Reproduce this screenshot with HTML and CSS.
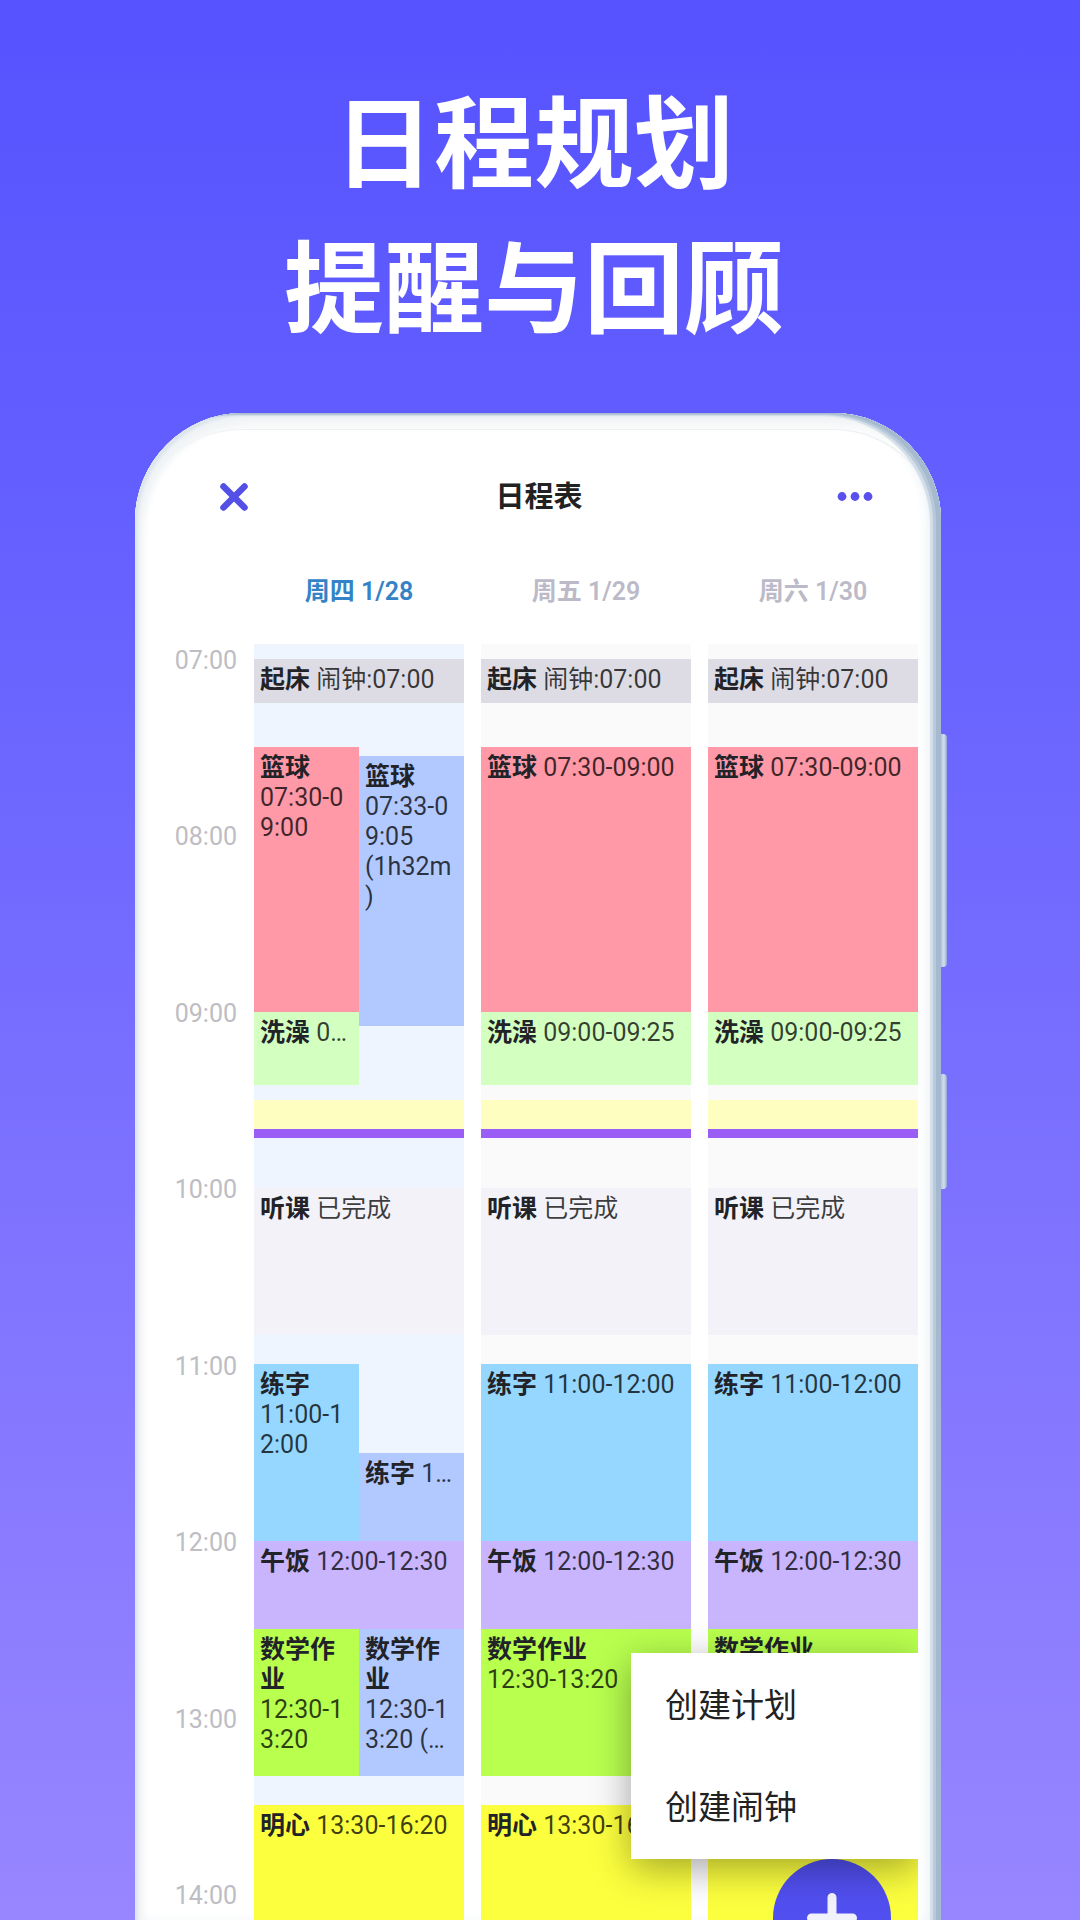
FILE: index.html
```html
<!DOCTYPE html>
<html lang="zh-CN">
<head>
<meta charset="utf-8">
<title>日程表</title>
<meta name="viewport" content="width=device-width, initial-scale=1">
<link rel="stylesheet" href="styles.css">
</head>
<body>
<div class="page">
<h1 class="slogan">日程规划<br>提醒与回顾</h1>
<div class="phone">
<div class="side-btn volume"></div>
<div class="side-btn power"></div>
<main class="screen">
<header class="topbar">
<button type="button" class="icon-btn" aria-label="关闭">
<svg width="28" height="28" viewBox="0 0 28 28"><path d="M3.5 3.5l21 21M24.5 3.5l-21 21" stroke="#5450e6" stroke-width="6.5" stroke-linecap="round"/></svg>
</button>
<h2>日程表</h2>
<button type="button" class="icon-btn more" aria-label="更多">
<svg width="36" height="10" viewBox="0 0 36 10" fill="#5a50ee"><circle cx="5" cy="4.5" r="4.4"/><circle cx="18" cy="4.5" r="4.4"/><circle cx="31" cy="4.5" r="4.4"/></svg>
</button>
</header>
<div class="weekdays">
<span></span>
<span class="today">周四 1/28</span>
<span>周五 1/29</span>
<span>周六 1/30</span>
</div>
<div class="calendar">
<div class="hours">
<span>07:00</span><span>08:00</span><span>09:00</span><span>10:00</span><span>11:00</span><span>12:00</span><span>13:00</span><span>14:00</span>
</div>

<div class="day current">
<div class="event alarm"><strong>起床</strong> <span>闹钟:07:00</span></div>
<div class="event ball half"><strong>篮球</strong><span>07:30-09:00</span></div>
<div class="event ball-real actual half"><strong>篮球</strong><span>07:33-09:05</span><span>(1h32m)</span></div>
<div class="event bath half one-line"><strong>洗澡</strong> <span>09:00-09:25</span></div>
<div class="event note"></div>
<div class="event now"></div>
<div class="event lesson"><strong>听课</strong> <span>已完成</span></div>
<div class="event write half"><strong>练字</strong><span>11:00-12:00</span></div>
<div class="event write-real actual half one-line"><strong>练字</strong> <span>11:30-12:00</span></div>
<div class="event lunch"><strong>午饭</strong> <span>12:00-12:30</span></div>
<div class="event math half"><strong>数学作业</strong><span>12:30-13:20</span></div>
<div class="event math actual half"><div class="clamp"><strong>数学作业</strong><span>12:30-13:20 (50m)</span></div></div>
<div class="event mind"><strong>明心</strong> <span>13:30-16:20</span></div>
</div>

<div class="day">
<div class="event alarm"><strong>起床</strong> <span>闹钟:07:00</span></div>
<div class="event ball"><strong>篮球</strong> <span>07:30-09:00</span></div>
<div class="event bath"><strong>洗澡</strong> <span>09:00-09:25</span></div>
<div class="event note"></div>
<div class="event now"></div>
<div class="event lesson"><strong>听课</strong> <span>已完成</span></div>
<div class="event write"><strong>练字</strong> <span>11:00-12:00</span></div>
<div class="event lunch"><strong>午饭</strong> <span>12:00-12:30</span></div>
<div class="event math"><strong>数学作业</strong> <span>12:30-13:20</span></div>
<div class="event mind"><strong>明心</strong> <span>13:30-16:20</span></div>
</div>

<div class="day">
<div class="event alarm"><strong>起床</strong> <span>闹钟:07:00</span></div>
<div class="event ball"><strong>篮球</strong> <span>07:30-09:00</span></div>
<div class="event bath"><strong>洗澡</strong> <span>09:00-09:25</span></div>
<div class="event note"></div>
<div class="event now"></div>
<div class="event lesson"><strong>听课</strong> <span>已完成</span></div>
<div class="event write"><strong>练字</strong> <span>11:00-12:00</span></div>
<div class="event lunch"><strong>午饭</strong> <span>12:00-12:30</span></div>
<div class="event math"><strong>数学作业</strong> <span>12:30-13:20</span></div>
<div class="event mind"><strong>明心</strong> <span>13:30-16:20</span></div>
</div>
</div>
<button type="button" class="fab" aria-label="新建">
<svg width="50" height="50" viewBox="0 0 50 50"><path d="M25 4.500v41M4.500 25h41" stroke="#f1f2fb" stroke-width="9" stroke-linecap="round"/></svg>
</button>
<div class="menu">
<button type="button">创建计划</button>
<button type="button">创建闹钟</button>
</div>
</main>
</div>
</div>
</body>
</html>
```
FILE: styles.css
```css
* { box-sizing: border-box; }
body { margin: 0; font-family: Roboto, "Noto Sans CJK SC", sans-serif; color: #222; }
button { font-family: inherit; border: none; background: none; padding: 0; cursor: pointer; }
.page { height: 100vh; overflow: hidden; display: flex; flex-direction: column; background: linear-gradient(#5653ff, #625eff 24%, #9886ff); }
.slogan { margin: 0; padding: 64px 12px 59px 0; font-family: "Noto Sans CJK SC", sans-serif; font-size: 100px; line-height: 145px; font-weight: 700; text-align: center; color: #fff; }

/* phone frame */
.phone {
  position: relative; flex: 1; min-height: 0; display: flex; margin: 0 139px 0 135px; padding: 34px 23px 0 18px;
  border-radius: 108px 108px 0 0; background: #fff;
  box-shadow: inset -5px 1px 0 #a5bacf, inset -8px 2px 0 #b7c9da, inset -11px 3px 1px #d3dee8, inset 3px 3px 3px #dde6ed, inset 9px 11px 6px #f1f4f6, inset 0 16px 0 #fafbfb, inset -1px 17px 0 #edf1f4, inset -16px 0 8px #f2f6f9;
}
.side-btn { position: absolute; left: 100%; width: 6px; border-radius: 0 4px 4px 0; background: linear-gradient(90deg, #b4c5dc, #d5deed 50%, #8fa6d6); }
.volume { top: 321px; height: 233px; }
.power { top: 661px; height: 115px; }

.screen { position: relative; flex: 1; min-width: 0; overflow: hidden; }
.topbar { display: flex; align-items: center; height: 99px; padding: 0 45px 0 67px; }
.topbar h2 { flex: 1; margin: 0; font-size: 29px; line-height: 40px; font-weight: 700; text-align: center; }
.icon-btn { display: flex; align-items: center; justify-content: flex-end; height: 48px; }
.more { width: 43px; }
.weekdays, .calendar { display: grid; grid-template-columns: 84px 1fr 1fr 1fr; column-gap: 17px; }
.weekdays { height: 98px; padding-top: 31px; font-size: 25px; line-height: 30px; font-weight: 600; text-align: center; color: #bcbac8; }
.weekdays .today { color: #3483c6; }
.hours { display: flex; flex-direction: column; justify-content: space-between; height: 1267px; padding-top: 2px; font-size: 25px; line-height: 30px; text-align: right; color: #bdbdc3; }

/* one row per time slot used by the events, 07:00 is the second line */
.day {
  display: grid; grid-template-columns: 1fr 1fr; min-width: 0; background: #fafafa;
  grid-template-rows: 15px 44px 44px 9px 256px 14px 59px 15px 29px 9px 50px 147px 29px 89px 88px 88px 147px 29px 300px;
}
.day.current { background: #eef5fe; }
.event { grid-column: 1 / -1; min-width: 0; min-height: 0; padding: 6px 6px 0; overflow: hidden; font-size: 25px; line-height: 30px; color: rgba(0, 0, 0, 0.76); }
.event strong { color: #222328; }
.event span { display: inline-block; }
.half { grid-column: 1; }
.actual { grid-column: 2; }
.half strong, .half span { display: block; line-break: anywhere; }
.one-line { white-space: nowrap; text-overflow: ellipsis; }
.one-line strong, .one-line span { display: inline; }
.clamp { display: -webkit-box; -webkit-box-orient: vertical; -webkit-line-clamp: 4; overflow: hidden; }

.alarm { grid-row: 2; background: #dddce5; }
.ball { grid-row: 4 / 6; background: #ff98a7; }
.ball-real { grid-row: 5 / 7; }
.bath { grid-row: 6 / 8; background: #d3ffc0; }
.note { grid-row: 9; background: #fefec0; }
.now { grid-row: 10; padding: 0; background: #9a5ef6; }
.lesson { grid-row: 12; background: #f3f2f8; }
.write { grid-row: 14 / 16; background: #95d7ff; }
.write-real { grid-row: 15; }
.lunch { grid-row: 16; background: #c8b5fd; }
.math { grid-row: 17; background: #b8ff4e; }
.mind { grid-row: 19; background: #fcff3e; }
.event.actual { background: #b2c9ff; }

.menu { position: absolute; right: 0; bottom: 61px; width: 287px; padding-top: 2px; background: #fff; box-shadow: 0 10px 36px rgba(0, 0, 0, 0.35); }
.menu button { display: block; width: 100%; height: 102px; padding-left: 34px; font-size: 33px; line-height: 40px; text-align: left; color: #222; }
.fab { position: absolute; right: 27px; bottom: -57px; width: 118px; height: 118px; display: flex; align-items: center; justify-content: center; border-radius: 50%; background: #514ff0; }
```
